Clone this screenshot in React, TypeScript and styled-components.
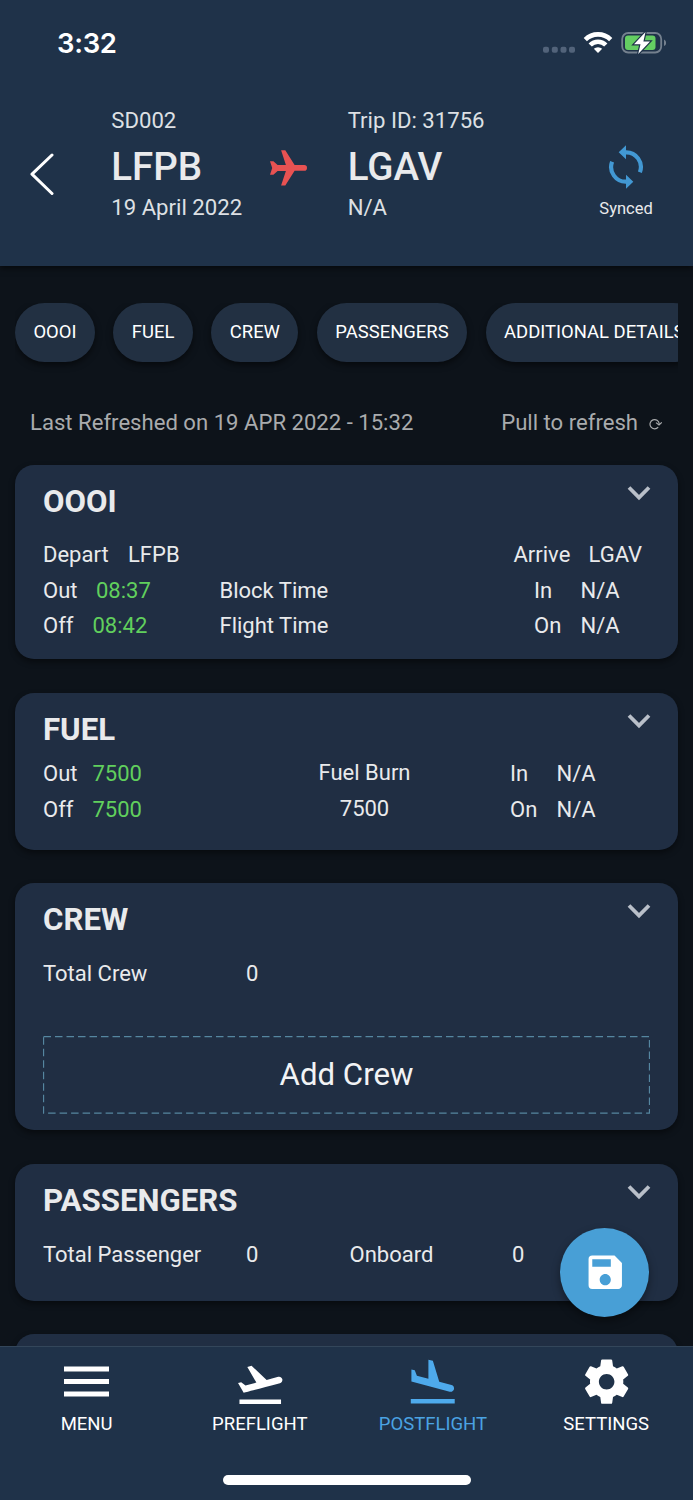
import React from "react";
import styled, { createGlobalStyle } from "styled-components";
import { MdFlightTakeoff, MdFlightLand, MdSave } from "react-icons/md";

const Global = createGlobalStyle`
  * { box-sizing: border-box; }
  body { margin: 0; background: #0d131a; font-family: Roboto, "Liberation Sans", sans-serif; color: #e9eaec; }
`;

const Screen = styled.div`
  width: 693px;
  height: 1500px;
  display: flex;
  flex-direction: column;
  overflow: hidden;
  position: relative;
`;

const Header = styled.header`
  height: 266px;
  flex: none;
  background: #1f3249;
  box-shadow: 0 2px 6px rgba(0, 0, 0, 0.6);
`;

const StatusBar = styled.div`
  height: 86px;
  padding: 0 27px 0 57px;
  display: flex;
  align-items: center;
  justify-content: space-between;
  color: #fff;
`;

const Clock = styled.span`
  font: 600 27.5px/32px Inter, sans-serif;
  letter-spacing: -0.3px;
`;

const StatusIcons = styled.div`
  display: flex;
  align-items: center;
  svg { display: block; }
`;

const TripRow = styled.div`
  display: flex;
  padding-left: 30px;
`;

const Back = styled.div`
  width: 81.3px;
  padding-top: 67px;
`;

const Airport = styled.div<{ $w: number }>`
  width: ${(p) => p.$w}px;
  padding-top: 20px;
  display: flex;
  flex-direction: column;
  white-space: nowrap;
`;

const Small = styled.span`
  font-size: 22.15px;
  line-height: 28px;
  color: #dde0e4;
`;

const Code = styled.span`
  font-size: 38.5px;
  line-height: 46px;
  font-weight: 500;
  margin: 10px 0 3px;
`;

const PlaneBox = styled.div`
  width: 80px;
  padding: 62px 0 0 1px;
  color: #e85252;
`;

const Sync = styled.div`
  width: 80px;
  margin-left: 5.8px;
  padding-top: 57px;
  display: flex;
  flex-direction: column;
  align-items: center;
  font-size: 16.5px;
  line-height: 20px;
  svg { color: #4298d3; margin-bottom: 8px; }
`;

const Body = styled.main`
  flex: 1;
  min-height: 0;
  overflow: hidden;
  padding: 37px 15px 0;
`;

const Chips = styled.div`
  display: flex;
  gap: 18.6px;
  height: 72px;
  overflow: hidden;
`;

const Chip = styled.div`
  flex: none;
  height: 59px;
  padding: 0 18.4px;
  border-radius: 29.5px;
  background: #223042;
  box-shadow: 0 3px 6px rgba(0, 0, 0, 0.5);
  font-size: 18.45px;
  line-height: 58px;
  color: #fff;
  white-space: nowrap;
`;

const Refresh = styled.div`
  height: 90px;
  padding: 4px 16px 0 15px;
  display: flex;
  align-items: center;
  justify-content: space-between;
  font-size: 22.12px;
  color: #a9abad;
`;

const PullHint = styled.span`
  display: flex;
  align-items: center;
  gap: 11px;
  svg { margin-top: 4px; }
`;

const Card = styled.section<{ $h: number }>`
  height: ${(p) => p.$h}px;
  margin-bottom: 33.5px;
  padding: 0 27px 0 28px;
  border-radius: 19px;
  background: #202e43;
  box-shadow: 0 3px 6px rgba(0, 0, 0, 0.45);
`;

const CardHead = styled.div<{ $h: number }>`
  height: ${(p) => p.$h}px;
  display: flex;
  justify-content: space-between;
  svg { margin-top: 20px; }
`;

const Title = styled.h2`
  margin: 19px 0 0;
  font-size: 31.2px;
  line-height: 36px;
  font-weight: 700;
`;

const Row = styled.div`
  height: 35.7px;
  display: flex;
  align-items: center;
  font-size: 22px;
  white-space: nowrap;
`;

const Cell = styled.span<{ $w?: number; $green?: boolean; $center?: boolean; $up?: boolean }>`
  flex: none;
  width: ${(p) => (p.$w ? p.$w + "px" : "auto")};
  text-align: ${(p) => (p.$center ? "center" : "left")};
  color: ${(p) => (p.$green ? "#61d05d" : "inherit")};
  margin-top: ${(p) => (p.$up ? "-2px" : "0")};
`;

const AddCrew = styled.div`
  width: 607px;
  height: 78px;
  margin-top: 44.3px;
  display: grid;
  align-items: center;
  justify-items: center;
  font-size: 31.2px;
  color: #f2f3f5;
  > * { grid-area: 1 / 1; }
`;

const Fab = styled.button`
  position: absolute;
  left: 560px;
  top: 1228px;
  width: 89px;
  height: 89px;
  padding: 0 0 1px 1px;
  border: 0;
  border-radius: 50%;
  background: #489fd6;
  color: #fff;
  display: flex;
  align-items: center;
  justify-content: center;
  box-shadow: 0 4px 8px rgba(0, 0, 0, 0.4);
`;

const TabBar = styled.nav`
  flex: none;
  height: 154px;
  border-top: 1px solid #33465a;
  background: #1f3249;
`;

const Tabs = styled.div`
  display: grid;
  grid-template-columns: repeat(4, 173.2px);
`;

const Tab = styled.div<{ $active?: boolean }>`
  display: flex;
  flex-direction: column;
  align-items: center;
  font-size: 18.5px;
  line-height: 22px;
  color: ${(p) => (p.$active ? "#4ba3e3" : "#fff")};
`;

const TabIcon = styled.div<{ $top: number }>`
  height: 66px;
  padding-top: ${(p) => p.$top}px;
  svg { display: block; }
`;

const HomeBar = styled.div`
  width: 248px;
  height: 10px;
  margin: 40px auto 0;
  border-radius: 5px;
  background: #fff;
`;

const Chevron = () => (
  <svg width="24" height="16" viewBox="0 0 24 16" fill="none" stroke="#b9bfc9" strokeWidth="3.8">
    <path d="M2 2.5 12 12.5 22 2.5" />
  </svg>
);

const SyncIcon = () => (
  <svg width="36" height="48" viewBox="-18 -24 36 48">
    <path d="M-.5-14.7A14.7 14.7 0 0 1 13.9 5.2M.5 14.7A14.7 14.7 0 0 1-13.9-5.2" fill="none" stroke="currentColor" strokeWidth="4.2" />
    <path d="M-7.3-14.7 0-21.8V-7.8zM7.3 14.7 0 21.8V7.8z" fill="currentColor" />
  </svg>
);

const CogIcon = () => (
  <svg width="53.3" height="53.3" viewBox="0 0 24 24" fill="currentColor">
    <path d="M19.43 12.98c.04-.32.07-.64.07-.98s-.03-.66-.07-.98l2.11-1.65c.19-.15.24-.42.12-.64l-2-3.46c-.12-.22-.39-.3-.61-.22l-2.49 1c-.52-.4-1.08-.73-1.69-.98l-.38-2.65C14.46 2.18 14.25 2 14 2h-4c-.25 0-.46.18-.49.42l-.38 2.65c-.61.25-1.17.59-1.69.98l-2.49-1c-.23-.09-.49 0-.61.22l-2 3.46c-.13.22-.07.49.12.64l2.11 1.65c-.04.32-.07.65-.07.98s.03.66.07.98l-2.11 1.65c-.19.15-.24.42-.12.64l2 3.46c.12.22.39.3.61.22l2.49-1c.52.4 1.08.73 1.69.98l.38 2.65c.03.24.24.42.49.42h4c.25 0 .46-.18.49-.42l.38-2.65c.61-.25 1.17-.59 1.69-.98l2.49 1c.23.09.49 0 .61-.22l2-3.46c.12-.22.07-.49-.12-.64l-2.11-1.65zM12 15.5c-1.93 0-3.5-1.57-3.5-3.5s1.57-3.5 3.5-3.5 3.5 1.57 3.5 3.5-1.57 3.5-3.5 3.5z" />
  </svg>
);

export default function App() {
  return (
    <Screen>
      <Global />
      <Header>
        <StatusBar>
          <Clock>3:32</Clock>
          <StatusIcons>
            <svg width="124" height="26" viewBox="542 30 124 26">
              <g fill="#52637a">
                <rect x="543" y="46.8" width="6" height="6" rx="2" />
                <rect x="551.8" y="46.8" width="6" height="6" rx="2" />
                <rect x="560.5" y="46.8" width="6" height="6" rx="2" />
                <rect x="569" y="46.8" width="6" height="6" rx="2" />
              </g>
              <g fill="none" stroke="#fff" strokeWidth="4.6">
                <path d="M585.3 39.6a18 18 0 0 1 25.4 0" />
                <path d="M590.2 45a11 11 0 0 1 15.6 0" />
              </g>
              <path d="M593.8 48.8a6.2 6.2 0 0 1 8.4 0L598 53z" fill="#fff" />
              <rect x="622.2" y="33" width="39" height="19.5" rx="6" fill="none" stroke="#74808e" strokeWidth="1.8" />
              <path d="M664 39.5v6.5q2.2-1 2.2-3.2T664 39.5z" fill="#74808e" />
              <rect x="625" y="35.6" width="30.5" height="14.4" rx="3" fill="#64ce62" />
              <path d="M645.5 32 634 44.2h6.5L638.2 54 650 41.4h-6.6z" fill="#fff" stroke="#1f3249" strokeWidth="2.4" paintOrder="stroke" />
            </svg>
          </StatusIcons>
        </StatusBar>
        <TripRow>
          <Back>
            <svg width="24" height="43" viewBox="0 0 24 43" fill="none" stroke="#fff" strokeWidth="3" strokeLinecap="round" strokeLinejoin="round">
              <path d="M22 2 2 21.2 22 40.5" />
            </svg>
          </Back>
          <Airport $w={156.4}>
            <Small>SD002</Small>
            <Code>LFPB</Code>
            <Small>19 April 2022</Small>
          </Airport>
          <PlaneBox>
            <svg width="40" height="40" viewBox="269 148.5 40 40" fill="currentColor">
              <path d="M304.2 165.6a2.8 2.8 0 0 1 0 5.6H294.6L285.3 186h-4.2L285.9 171.4H277.6L273.4 175.2H270L272.2 168.4 270 161.7h3.4L277.6 165.5H285.9L281.1 150.8h4.2L294.6 165.6z" />
            </svg>
          </PlaneBox>
          <Airport $w={232.6}>
            <Small>Trip ID: 31756</Small>
            <Code>LGAV</Code>
            <Small>N/A</Small>
          </Airport>
          <Sync>
            <SyncIcon />
            Synced
          </Sync>
        </TripRow>
      </Header>
      <Body>
        <Chips>
          <Chip>OOOI</Chip>
          <Chip>FUEL</Chip>
          <Chip>CREW</Chip>
          <Chip>PASSENGERS</Chip>
          <Chip>ADDITIONAL DETAILS</Chip>
        </Chips>
        <Refresh>
          <span>Last Refreshed on 19 APR 2022 - 15:32</span>
          <PullHint>
            Pull to refresh
            <svg width="13" height="12" viewBox="0 0 13 12" fill="none" stroke="#a9abad" strokeWidth="1.2">
              <path d="M9.2 9.1A4.6 4.6 0 1 1 10.2 5.8M7 4.6 10 7 12.8 4.4" />
            </svg>
          </PullHint>
        </Refresh>
        <Card $h={194}>
          <CardHead $h={71.5}>
            <Title>OOOI</Title>
            <Chevron />
          </CardHead>
          <Row><Cell $w={85}>Depart</Cell><Cell $w={385.5}>LFPB</Cell><Cell $w={75}>Arrive</Cell><Cell>LGAV</Cell></Row>
          <Row><Cell $w={53}>Out</Cell><Cell $w={123.5} $green>08:37</Cell><Cell $w={314.5}>Block Time</Cell><Cell $w={46.5}>In</Cell><Cell>N/A</Cell></Row>
          <Row><Cell $w={49.5}>Off</Cell><Cell $w={127} $green>08:42</Cell><Cell $w={314.5}>Flight Time</Cell><Cell $w={46.5}>On</Cell><Cell>N/A</Cell></Row>
        </Card>
        <Card $h={157}>
          <CardHead $h={63}>
            <Title>FUEL</Title>
            <Chevron />
          </CardHead>
          <Row><Cell $w={49.5}>Out</Cell><Cell $w={210} $green>7500</Cell><Cell $w={124} $center $up>Fuel Burn</Cell><Cell $w={83.5} /><Cell $w={46.5}>In</Cell><Cell>N/A</Cell></Row>
          <Row><Cell $w={49.5}>Off</Cell><Cell $w={210} $green>7500</Cell><Cell $w={124} $center $up>7500</Cell><Cell $w={83.5} /><Cell $w={46.5}>On</Cell><Cell>N/A</Cell></Row>
        </Card>
        <Card $h={247}>
          <CardHead $h={73}>
            <Title>CREW</Title>
            <Chevron />
          </CardHead>
          <Row><Cell $w={203}>Total Crew</Cell><Cell>0</Cell></Row>
          <AddCrew>
            <svg width="607" height="78" fill="none" stroke="#5586a0" strokeWidth="1.3" strokeDasharray="7.5 4">
              <rect x="0.5" y="0.5" width="606" height="76.6" />
            </svg>
            <span>Add Crew</span>
          </AddCrew>
        </Card>
        <Card $h={137}>
          <CardHead $h={73}>
            <Title>PASSENGERS</Title>
            <Chevron />
          </CardHead>
          <Row><Cell $w={203}>Total Passenger</Cell><Cell $w={103.5}>0</Cell><Cell $w={162.5}>Onboard</Cell><Cell>0</Cell></Row>
        </Card>
        <Card $h={137} />
      </Body>
      <Fab><MdSave size={44.5} /></Fab>
      <TabBar>
        <Tabs>
          <Tab>
            <TabIcon $top={8}>
              <svg width="45" height="54" fill="#fff"><path d="M0 11.5h45v5H0zM0 24h45v5H0zM0 36.5h45v5H0z" /></svg>
            </TabIcon>
            MENU
          </Tab>
          <Tab><TabIcon $top={10.5}><MdFlightTakeoff size={52.5} /></TabIcon>PREFLIGHT</Tab>
          <Tab $active><TabIcon $top={8}><MdFlightLand size={55.5} color="#4eaaec" /></TabIcon>POSTFLIGHT</Tab>
          <Tab><TabIcon $top={8}><CogIcon /></TabIcon>SETTINGS</Tab>
        </Tabs>
        <HomeBar />
      </TabBar>
    </Screen>
  );
}
